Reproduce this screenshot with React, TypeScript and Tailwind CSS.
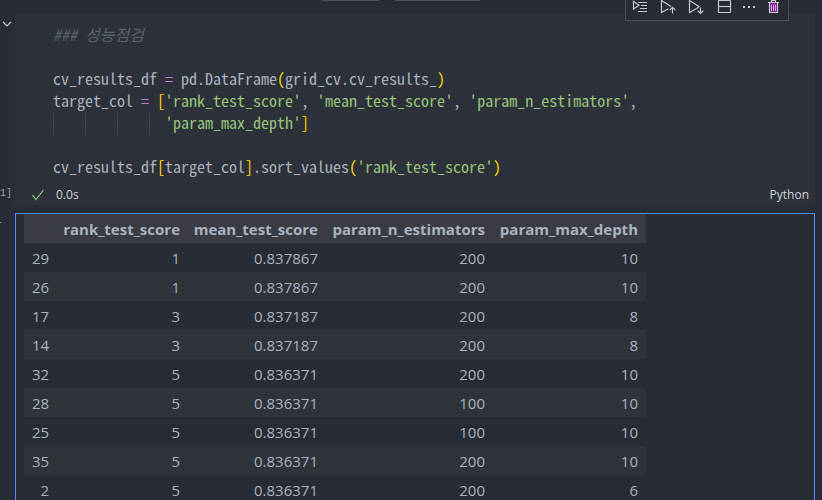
import type { ReactNode } from 'react';

const COLUMNS = ['rank_test_score', 'mean_test_score', 'param_n_estimators', 'param_max_depth'];

const ROWS = [
  ['29', '1', '0.837867', '200', '10'],
  ['26', '1', '0.837867', '200', '10'],
  ['17', '3', '0.837187', '200', '8'],
  ['14', '3', '0.837187', '200', '8'],
  ['32', '5', '0.836371', '200', '10'],
  ['28', '5', '0.836371', '100', '10'],
  ['25', '5', '0.836371', '100', '10'],
  ['35', '5', '0.836371', '200', '10'],
  ['2', '5', '0.836371', '200', '6'],
];

function Icon({ children, className = '' }: { children: ReactNode; className?: string }) {
  return (
    <svg viewBox="0 0 16 16" fill="none" stroke="currentColor" strokeWidth="1.2" className={`block size-4 ${className}`}>
      {children}
    </svg>
  );
}

function ToolButton({ label, children }: { label: string; children: ReactNode }) {
  return (
    <button type="button" aria-label={label} className="shrink-0">
      {children}
    </button>
  );
}

function CellToolbar() {
  return (
    <div className="absolute top-0 right-[33px] flex h-[21px] w-[164px] items-start justify-between border border-t-0 border-[#4b4e54] bg-[#282c34] pr-[7px] pl-[6px] text-[#c5c8cc]">
      <div className="flex gap-3">
        <ToolButton label="Run by line">
          <Icon>
            <path d="M1.5 1.5v7.5L7 5.2z" />
            <path d="M6.5 2.5h8.5M9 5.5h6M8 8.5h7M6 11.5h9" />
          </Icon>
        </ToolButton>
        <ToolButton label="Execute above cells">
          <Icon>
            <path d="M8.5 8.8L1.5 12.5V.5l9.5 6" />
            <path d="M12.5 13.5V7.5M9.7 10.2l2.8-2.8 2.8 2.8" />
          </Icon>
        </ToolButton>
        <ToolButton label="Execute cell and below">
          <Icon>
            <path d="M9 8.2L1.5 12.5V.5l9.5 6z" />
            <path d="M12.5 7.5v6M9.7 10.7l2.8 2.8 2.8-2.8" />
          </Icon>
        </ToolButton>
        <ToolButton label="Split cell">
          <Icon>
            <rect x="2.5" y=".5" width="12" height="12" rx=".5" />
            <path d="M2.5 6.5h12" />
          </Icon>
        </ToolButton>
      </div>
      <div className="flex gap-2">
        <ToolButton label="More actions">
          <Icon>
            <path d="M2 7h2M7 7h2M12 7h2" strokeWidth="2" />
          </Icon>
        </ToolButton>
        <ToolButton label="Delete cell">
          <Icon>
            <path d="M4.5 3v9.5h8V3" fill="#7d1d8d" />
            <path d="M3 2.5h11M6.5 2.5v-2h4v2" />
            <path d="M6.5 4.5v6.5M8.5 4.5v6.5M10.5 4.5v6.5" stroke="#dca6e4" strokeWidth="1" />
          </Icon>
        </ToolButton>
      </div>
    </div>
  );
}

function Str({ children }: { children: ReactNode }) {
  return <span className="text-[#98c379]">{children}</span>;
}

function Bracket({ children }: { children: ReactNode }) {
  return <span className="text-[#ffd700]">{children}</span>;
}

function Operator({ children }: { children: ReactNode }) {
  return <span className="text-[#c678dd]">{children}</span>;
}

function CodeLine({ children }: { children?: ReactNode }) {
  return <div className="h-[22px]">{children}</div>;
}

function CodeEditor() {
  return (
    <div className="pt-[10px] pb-[2px] pl-[38px] font-['Noto_Sans_Mono_CJK_KR','Noto_Sans_CJK_KR',monospace] text-[16px] leading-[22px] whitespace-pre text-[#abb2bf]">
      <CodeLine>
        <span className="text-[#5c6370] italic">### 성능점검</span>
      </CodeLine>
      <CodeLine />
      <CodeLine>
        cv_results_df <Operator>=</Operator> pd.DataFrame<Bracket>(</Bracket>grid_cv.cv_results_<Bracket>)</Bracket>
      </CodeLine>
      <CodeLine>
        target_col <Operator>=</Operator> <Bracket>[</Bracket>
        <Str>'rank_test_score'</Str>, <Str>'mean_test_score'</Str>, <Str>'param_n_estimators'</Str>,
      </CodeLine>
      <CodeLine>
        <div className="flex">
          {[0, 1, 2].map((guide) => (
            <span key={guide} className="mt-[2px] h-[22px] w-8 border-l border-[#3f434b]" />
          ))}
          <span className="mt-[2px] h-[22px] w-4 border-l border-[#3f434b]" />
          <Str>'param_max_depth'</Str>
          <Bracket>]</Bracket>
        </div>
      </CodeLine>
      <CodeLine />
      <CodeLine>
        cv_results_df<Bracket>[</Bracket>target_col<Bracket>]</Bracket>.sort_values<Bracket>(</Bracket>
        <Str>'rank_test_score'</Str>
        <Bracket>)</Bracket>
      </CodeLine>
    </div>
  );
}

function StatusBar() {
  return (
    <div className="flex h-[26px] items-center gap-[10px] pt-[5px] pr-[6px] pl-[15px] text-[12px] text-[#d0d2d6]">
      <Icon className="text-[#89d185]">
        <path d="M2.5 8l3.5 4.500L13.5 3" />
      </Icon>
      <span>0.0s</span>
      <span className="ml-auto">Python</span>
    </div>
  );
}

function ResultTable() {
  return (
    <table className="ml-2 w-[622px] table-fixed border-collapse text-right text-[15px] leading-[27px] text-[#abb2bf]">
      <colgroup>
        <col className="w-[33px]" />
        <col className="w-[131px]" />
        <col className="w-[138px]" />
        <col className="w-[167px]" />
        <col className="w-[153px]" />
      </colgroup>
      <thead>
        <tr className="bg-[#393c44]">
          <td />
          {COLUMNS.map((column) => (
            <th key={column} scope="col" className="pt-[2px] pr-2 pb-0 pl-1 text-right font-bold whitespace-nowrap">
              {column}
            </th>
          ))}
        </tr>
      </thead>
      <tbody>
        {ROWS.map(([index, ...values]) => (
          <tr key={index} className="even:bg-[#2f333a]">
            <th scope="row" className="px-2 pt-[2px] pb-0 text-right font-normal">{index}</th>
            {values.map((value, i) => (
              <td key={COLUMNS[i]} className="px-2 pt-[2px] pb-0">{value}</td>
            ))}
          </tr>
        ))}
      </tbody>
    </table>
  );
}

export default function App() {
  return (
    <main className="relative flex h-screen flex-col overflow-hidden bg-[#282c34] font-['Open_Sans','Noto_Sans',sans-serif]">
      <div className="flex h-[13px] shrink-0 gap-4 pl-[322px]">
        <span className="h-px w-[57px] bg-[#4f5155]" />
        <span className="h-px w-[85px] bg-[#4f5155]" />
      </div>

      <section className="flex shrink-0 pr-[7px]">
        <div className="flex w-[15px] shrink-0 flex-col items-end justify-between pt-[3px] text-[#9a9da3]">
          <button type="button" aria-label="Collapse cell" className="text-[#c5c8cc]">
            <Icon>
              <path d="M4 6l4 4 4-4" />
            </Icon>
          </button>
          <span className="pr-[3px] font-['Liberation_Mono',monospace] text-[10px] leading-[22px]">1]</span>
        </div>
        <div className="min-w-0 flex-1 bg-[#2d3139]">
          <CodeEditor />
          <StatusBar />
        </div>
      </section>

      <section className="mt-2 flex min-h-0 flex-1 pr-[7px]">
        <div className="w-[15px] shrink-0 pt-[9px]">
          <span className="block h-px w-px bg-[#9a9da3]" />
        </div>
        <div className="min-w-0 flex-1 overflow-hidden border border-b-0 border-[#528bff]">
          <ResultTable />
        </div>
      </section>

      <CellToolbar />
    </main>
  );
}
